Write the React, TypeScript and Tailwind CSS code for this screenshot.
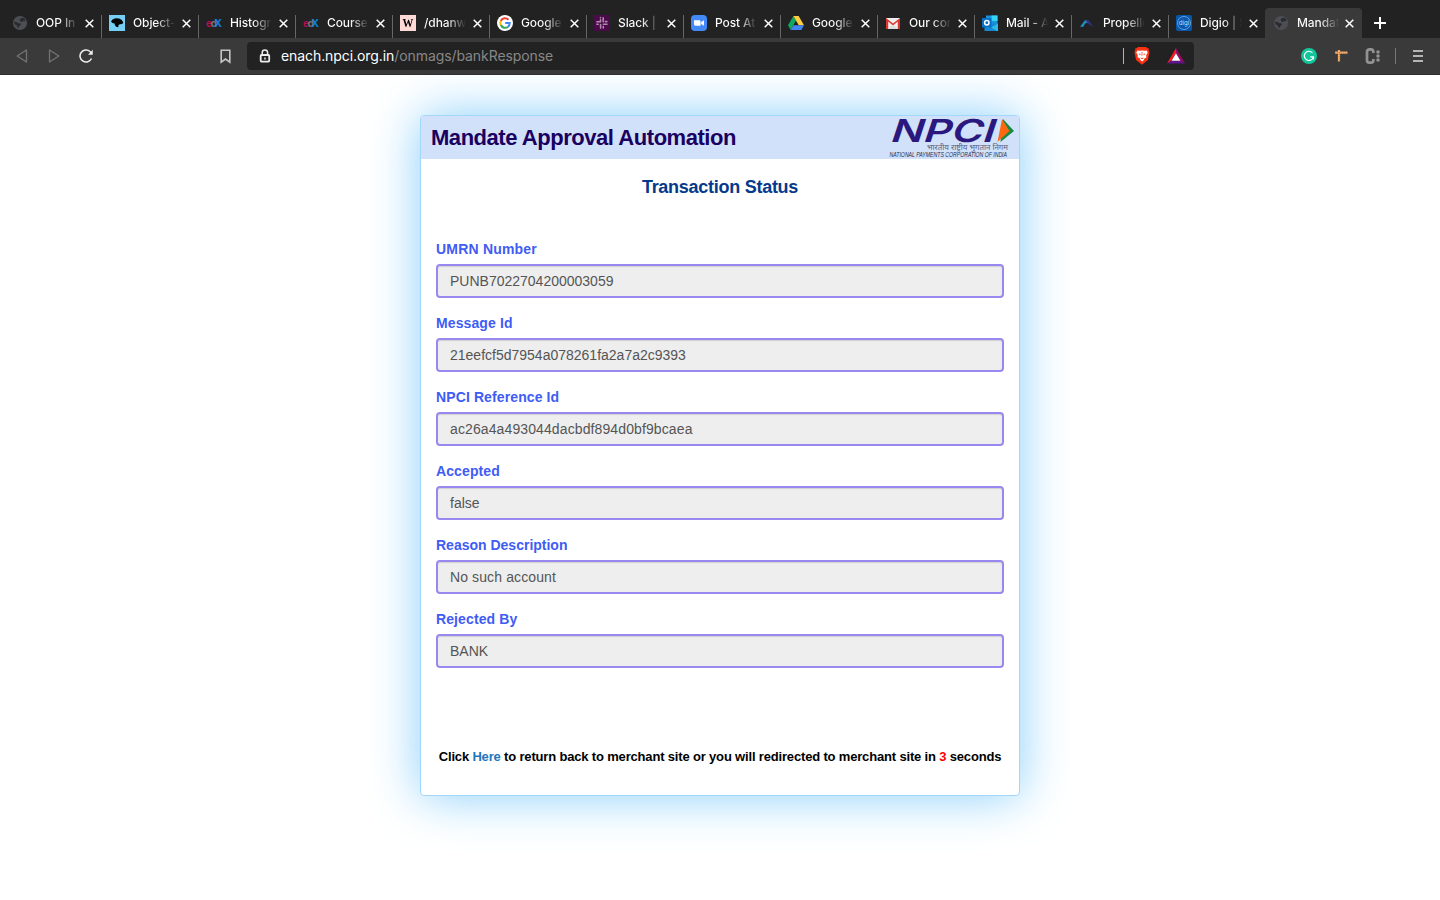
import React from "react";

function Globe() {
  return (
    <svg viewBox="0 0 16 16" className="size-4">
      <circle cx="8" cy="8" r="7.1" fill="#4c4e54" />
      <path d="M1.500 6.800 4.500 7q1.200.2 1.300 1.200h2.400q1.200.5.6 1.800l-1.300.8-.6 1.600-1.500.2-.6-2-1.800-1.200zM7.500 4.500 9.300 3l2.400.1 1.600 1.700-.4 1.400-1.700-.3-1.200 1-1.600-.3z" fill="#292b30" />
    </svg>
  );
}

function ObjectIcon() {
  return (
    <svg viewBox="0 0 16 16" className="size-4">
      <path d="M0 0h16v16H0z" fill="#75cff5" />
      <path d="M2 6.500 3.500 4.400l3-1.100 3.700.1 2.600 1.500 1.500 2.500-1 1.500-2.400.4-1.400.7-.2 2.300-2.200-.6-1.200-1.800-.4-1.400-2-.4z" fill="#050505" />
    </svg>
  );
}

function EdxIcon() {
  return (
    <svg viewBox="0 0 16 16" className="size-4 font-[Inter,sans-serif] font-bold">
      <text x="0" y="11.500" fontSize="10" fill="#b5104f">e</text>
      <text x="4.700" y="11.500" fontSize="10" fill="#6b7479">d</text>
      <text x="8.300" y="11.800" fontSize="10.500" fill="#0b80dc">X</text>
    </svg>
  );
}

function WIcon() {
  return (
    <span className="flex size-4 items-center justify-center bg-[#ffd9d6] font-['Liberation_Serif',serif] text-[12px] leading-4 font-bold text-black"><span className="scale-x-90">W</span></span>
  );
}

function GoogleIcon() {
  return (
    <svg viewBox="0 0 16 16" className="size-4" fill="none" strokeWidth="2">
      <circle cx="8" cy="8" r="8" fill="#fff" />
      <path d="M11.500 4.700A4.700 4.700 0 0 0 3.800 6" stroke="#ea4335" />
      <path d="M3.800 5.900a4.800 4.800 0 0 0 0 4.200" stroke="#fbbc05" />
      <path d="M3.800 10a4.700 4.700 0 0 0 7.300 1.700" stroke="#34a853" />
      <path d="M8.200 8h4.500c0 1.700-.6 2.900-1.700 3.800" stroke="#4285f4" />
    </svg>
  );
}

function SlackIcon() {
  return (
    <svg viewBox="0 0 16 16" className="size-4" fill="none">
      <path d="M0 0h16v16H0z" fill="#4a0b49" />
      <path d="M6.500 4.800V7M2.800 6.800h3.400M6.500 2.500v.2M9.200 2.800v3.400M9.200 6.700h.2M11.500 6.600h1.400M9.400 9.300h3.600M9.300 11.500v1.400M6.600 9.500v3.600M2.900 9.300h1.300" stroke="#b287ae" strokeWidth="1.600" strokeLinecap="round" />
    </svg>
  );
}

function ZoomIcon() {
  return (
    <svg viewBox="0 0 16 16" className="size-4">
      <rect width="16" height="16" rx="4" fill="#438af8" />
      <path d="M3 5.300h5.200q1.400 0 1.400 1.400v4H4.400Q3 10.700 3 9.300zM10.200 7.100 13 5.200v5.600l-2.800-1.900z" fill="#fff" />
    </svg>
  );
}

function DriveIcon() {
  return (
    <svg viewBox="0 0 16 16" className="size-4">
      <path d="M5.400 1 0 10.300 2.700 15 8 5.600z" fill="#11a861" />
      <path d="M5.400 1h5.200L16 10.300h-5.300z" fill="#ffcf42" />
      <path d="M5.500 10.300H16L13.300 15H2.700z" fill="#4285f4" />
    </svg>
  );
}

function GmailIcon() {
  return (
    <svg viewBox="0 0 16 16" className="size-4">
      <path d="M1 3h14v11H1z" fill="#eee" />
      <path d="M1 3 8 8.500 15 3v11h-2.200V6.600L8 10.500 3.200 6.600V14H1z" fill="#dc342e" />
      <path d="M3.200 14 8 9.800l4.800 4.200z" fill="#ddd" />
    </svg>
  );
}

function OutlookIcon() {
  return (
    <svg viewBox="0 0 16 16" className="size-4">
      <path d="M4 .5h11.500V10H4z" fill="#1695dc" />
      <path d="M9.500.5h6V6h-6z" fill="#35d2fb" />
      <path d="M2.500 8.500H16V16H2.500z" fill="#1687d2" />
      <path d="m16 8.500-7 4 6 3.500h1z" fill="#28bbea" />
      <path d="M0 3h9.500v9.500H0z" fill="#0870c7" />
      <circle cx="4.800" cy="7.800" r="2.200" fill="none" stroke="#fff" strokeWidth="1.500" />
    </svg>
  );
}

function PropellerIcon() {
  return (
    <svg viewBox="0 0 16 16" className="size-4">
      <path d="M1 11.800 6 5.300q1-1 2.500-.1L10 7.500Q5.500 7.300 4.500 11.800z" fill="#208fc5" />
      <path d="M7 5q2-1 3.200.8l4.300 6-5-2.600Q9 6.500 6.500 6z" fill="#2c327c" />
    </svg>
  );
}

function DigioIcon() {
  return (
    <svg viewBox="0 0 16 16" className="size-4 font-[Inter,sans-serif]">
      <rect width="16" height="16" rx="2" fill="#0757ad" />
      <circle cx="8" cy="8" r="6.500" fill="none" stroke="#a4cbef" strokeWidth=".6" />
      <text x="2.800" y="10" fontSize="6.500" textLength="10.500" lengthAdjust="spacingAndGlyphs" fill="#c4dff8">digi</text>
    </svg>
  );
}

const tabs = [
  { title: "OOP In", icon: Globe },
  { title: "Object-", icon: ObjectIcon },
  { title: "Histogr", icon: EdxIcon },
  { title: "Course", icon: EdxIcon },
  { title: "/dhanw", icon: WIcon },
  { title: "Google", icon: GoogleIcon },
  { title: "Slack |", icon: SlackIcon },
  { title: "Post At", icon: ZoomIcon },
  { title: "Google", icon: DriveIcon },
  { title: "Our cor", icon: GmailIcon },
  { title: "Mail - A", icon: OutlookIcon },
  { title: "Propello", icon: PropellerIcon },
  { title: "Digio | S", icon: DigioIcon },
  { title: "Mandat", icon: Globe },
];

function TabStrip() {
  return (
    <div className="flex h-[38px] items-end bg-[#222] pl-[5px]">
      {tabs.map(({ title, icon: Icon }, i) => {
        const active = i === tabs.length - 1;
        return (
          <div key={i} className={active ? "flex h-[30px] w-[97px] shrink-0 rounded-t-[4px] bg-[#3a3a3a] pt-[7px] pl-[8px]" : i === tabs.length - 2 ? "flex h-[23px] w-[96px] shrink-0 pl-[7px]" : "flex h-[23px] w-[97px] shrink-0 border-r border-[#676767] pl-[7px]"}>
            <div className="size-4 shrink-0"><Icon /></div>
            <div className="ml-2 h-4 w-[42px] shrink-0 overflow-hidden bg-linear-to-r from-white from-55% to-transparent bg-clip-text text-[12px] leading-4 font-medium tracking-[-0.1px] whitespace-nowrap text-transparent">{title}</div>
            <svg viewBox="0 0 9 9" className={active ? "mt-[3.500px] ml-[6px] size-[9px] shrink-0" : "mt-[3.500px] ml-[7px] size-[9px] shrink-0"} stroke="#fff" strokeWidth="1.500"><path d="m.7.7 7.600 7.600m0-7.600L.7 8.300" /></svg>
          </div>
        );
      })}
      <svg viewBox="0 0 12 12" className="mb-[9px] ml-[12px] size-3" stroke="#fff" strokeWidth="2"><path d="M6 0v12M0 6h12" /></svg>
    </div>
  );
}

function Toolbar() {
  return (
    <div className="flex h-[37px] items-center border-b border-[#303030] bg-[#3a3a3a] pl-[16px]">
      <svg viewBox="0 0 12 14" className="h-[14px] w-3" fill="none" stroke="#737373" strokeWidth="1.300" strokeLinejoin="round"><path d="M10.500 1v12L1.200 7z" /></svg>
      <svg viewBox="0 0 12 14" className="ml-[20px] h-[14px] w-3" fill="none" stroke="#737373" strokeWidth="1.300" strokeLinejoin="round"><path d="M1.500 1v12l9.300-6z" /></svg>
      <svg viewBox="0 0 14 14" className="ml-[19px] size-[14px]" fill="none" stroke="#efefef" strokeWidth="1.500"><path d="M12.500 9.500A6 6 0 1 1 11 2.500l1 1" /><path d="m13.800.8-.1 5H9z" fill="#efefef" stroke="none" /></svg>
      <svg viewBox="0 0 11 15" className="ml-[126.500px] h-[15px] w-[11px]" fill="none" stroke="#c5c5c5" strokeWidth="1.600"><path d="M1.200 1.200h8.600v12L5.500 10l-4.300 3.200z" /></svg>
      <div className="ml-[16.500px] flex h-[28px] w-[947px] items-center rounded-[4px] bg-[#222] pl-[12px]">
        <svg viewBox="0 0 12 14" className="h-[14px] w-3" fill="none" stroke="#ededed"><path d="M3.200 6V3.800a2.700 2.700 0 0 1 5.400 0V6" strokeWidth="1.500" /><rect x="1.700" y="6" width="8.500" height="6.600" rx=".8" strokeWidth="1.800" /><path d="M6 8.500v2" strokeWidth="1.500" /></svg>
        <div className="ml-[10px] w-[842px] text-[14px] leading-5 tracking-[-0.080px] whitespace-nowrap text-[#888]"><span className="text-white">enach.npci.org.in</span>/onmags/bankResponse</div>
        <div className="h-4 w-px bg-[#b5b5b5]" />
        <svg viewBox="0 0 16 18" className="ml-[10px] h-[18px] w-4">
          <path d="M4 0h8l1.300 1.300 1.600.2-.2 2 .9 1.500-1.700 8L8 17.800 2.100 13 .4 5l.9-1.500-.2-2 1.600-.2z" fill="#fb3211" />
          <path d="m3.300 3.500 2 .3L8 3.500l2.700.3 2-.3 1 2.300-1.500 2.500.2 2.200-2 1-.7 1.700L8 14.500 6.300 13l-.7-1.700-2-1 .2-2.200-1.500-2.300z" fill="#fff" />
          <path d="m4.500 6.500 2.200.6-.7 1.100zM11.500 6.500l-2.200.6.700 1.100zM6.300 10.500 8 11.300l1.700-.8-.9 1.500H7.200zM7.600 5h.8l-.1 4H7.700z" fill="#fb3211" />
        </svg>
        <svg viewBox="0 0 18 16" className="ml-[17px] h-4 w-[18px]"><path d="M9 0 0 15.500l4.500-2.700L9 5z" fill="#fa1b20" /><path d="m9 0 9 15.500-4.500-2.700L9 5z" fill="#9d0866" /><path d="m0 15.500 4.500-2.700h9l4.500 2.700z" fill="#5d168f" /><path d="M9 5.200 4.600 12.700h8.800z" fill="#fff" /></svg>
      </div>
      <svg viewBox="0 0 16 16" className="ml-[107px] size-4" fill="none"><circle cx="8" cy="8" r="8" fill="#12c59b" /><path d="M11.500 5A4.600 4.600 0 1 0 12.400 8.800H9.200M12.400 8.800v2.700" stroke="#fff" strokeWidth="1.200" /></svg>
      <svg viewBox="0 0 14 14" className="ml-[17px] size-[14px]" fill="none" stroke="#f2a969"><path d="M1 3.700h12.500M5 1v11.500" strokeWidth="2.200" /><path d="M1 4h12M5.500 3v9" stroke="#b87342" strokeDasharray="1 1" strokeWidth=".7" /></svg>
      <svg viewBox="0 0 16 16" className="ml-[17px] size-4" fill="none" stroke="#929292"><path d="M8.300 5V3.500Q8.300 1.300 5.300 1.300T2 3.500v9q0 2.200 3.300 2.200t3-2.200V11" strokeWidth="2.700" /><g fill="#929292" stroke="none"><circle cx="13" cy="4" r="1.800" /><circle cx="13" cy="8" r="1.800" /><circle cx="13" cy="12" r="1.800" /></g></svg>
      <div className="ml-[14px] h-4 w-px bg-[#777]" />
      <svg viewBox="0 0 10 12" className="ml-[17px] h-3 w-[10px]" stroke="#ddd" strokeWidth="1.700"><path d="M0 1h10M0 6h10M0 11h10" /></svg>
    </div>
  );
}

function NpciLogo() {
  return (
    <svg viewBox="0 0 127 43" className="h-[43px] w-[127px]">
      <text x="0" y="0" transform="translate(3 26) skewX(-6)" textLength="104" lengthAdjust="spacingAndGlyphs" className="fill-[#2b187e] font-[Inter,sans-serif] text-[31.500px] font-semibold italic">NPCI</text>
      <path d="m115 3 11 12-13.500 11z" fill="#148b42" />
      <path d="m114 3 7.500 12L109.500 26z" fill="#ff6810" />
      <text x="39" y="28" transform="scale(1 1.210)" textLength="81" lengthAdjust="spacingAndGlyphs" className="fill-[#596080] font-['Noto_Sans',sans-serif] text-[7px] italic">भारतीय राष्ट्रीय भुगतान निगम</text>
      <text x="1.500" y="34.500" transform="scale(1 1.200)" textLength="117.500" lengthAdjust="spacingAndGlyphs" className="fill-[#262b50] text-[5.500px] italic">NATIONAL PAYMENTS CORPORATION OF INDIA</text>
    </svg>
  );
}

const fields = [
  ["UMRN Number", "PUNB7022704200003059"],
  ["Message Id", "21eefcf5d7954a078261fa2a7a2c9393"],
  ["NPCI Reference Id", "ac26a4a493044dacbdf894d0bf9bcaea"],
  ["Accepted", "false"],
  ["Reason Description", "No such account"],
  ["Rejected By", "BANK"],
];

export default function App() {
  return (
    <div className="flex h-[900px] w-[1440px] flex-col overflow-hidden bg-white">
      <header className="relative z-10 font-[Inter,sans-serif]">
        <TabStrip />
        <Toolbar />
      </header>
      <main className="mx-auto mt-[40px] h-[681px] w-[600px] rounded-[4px] border border-[#a3d7fc] bg-white font-['Liberation_Sans',sans-serif] shadow-[0_0_50px_#87cefa]">
        <div className="flex h-[43px] items-center justify-between rounded-t-[3px] bg-[#d1e1fa] pr-[4px] pl-[10px]">
          <h1 className="text-[22px] leading-[43px] font-bold tracking-[-0.460px] text-[#190061]">Mandate Approval Automation</h1>
          <NpciLogo />
        </div>
        <h2 className="mt-[18px] text-center text-[18px] leading-5 font-bold tracking-[-0.270px] text-[#05398b]">Transaction Status</h2>
        <div className="mt-[42px] flex flex-col gap-[15px] px-[15px]">
          {fields.map(([label, value]) => (
            <div key={label}>
              <div className={label === "UMRN Number" ? "mb-[5px] text-[14px] leading-5 font-bold tracking-[0.200px] text-[#405cf5]" : label === "Reason Description" ? "mb-[5px] text-[14px] leading-5 font-bold text-[#405cf5]" : "mb-[5px] text-[14px] leading-5 font-bold tracking-[0.110px] text-[#405cf5]"}>{label}</div>
              <div className={label === "NPCI Reference Id" || label === "Reason Description" ? "h-[34px] rounded-[4px] border-2 border-[#9789f0] bg-[#eee] px-[12px] text-[14px] leading-[30px] tracking-[0.110px] text-[#555] shadow-[inset_0_1px_1px_rgba(0,0,0,0.12)]" : "h-[34px] rounded-[4px] border-2 border-[#9789f0] bg-[#eee] px-[12px] text-[14px] leading-[30px] text-[#555] shadow-[inset_0_1px_1px_rgba(0,0,0,0.12)]"}>{value}</div>
            </div>
          ))}
        </div>
        <p className="mt-[79px] text-center text-[13px] leading-5 font-bold tracking-[-0.170px] whitespace-nowrap text-black">Click <span className="text-[#2176bd]">Here</span> to return back to merchant site or you will redirected to merchant site in <span className="text-[#f00]">3</span> seconds</p>
      </main>
    </div>
  );
}
